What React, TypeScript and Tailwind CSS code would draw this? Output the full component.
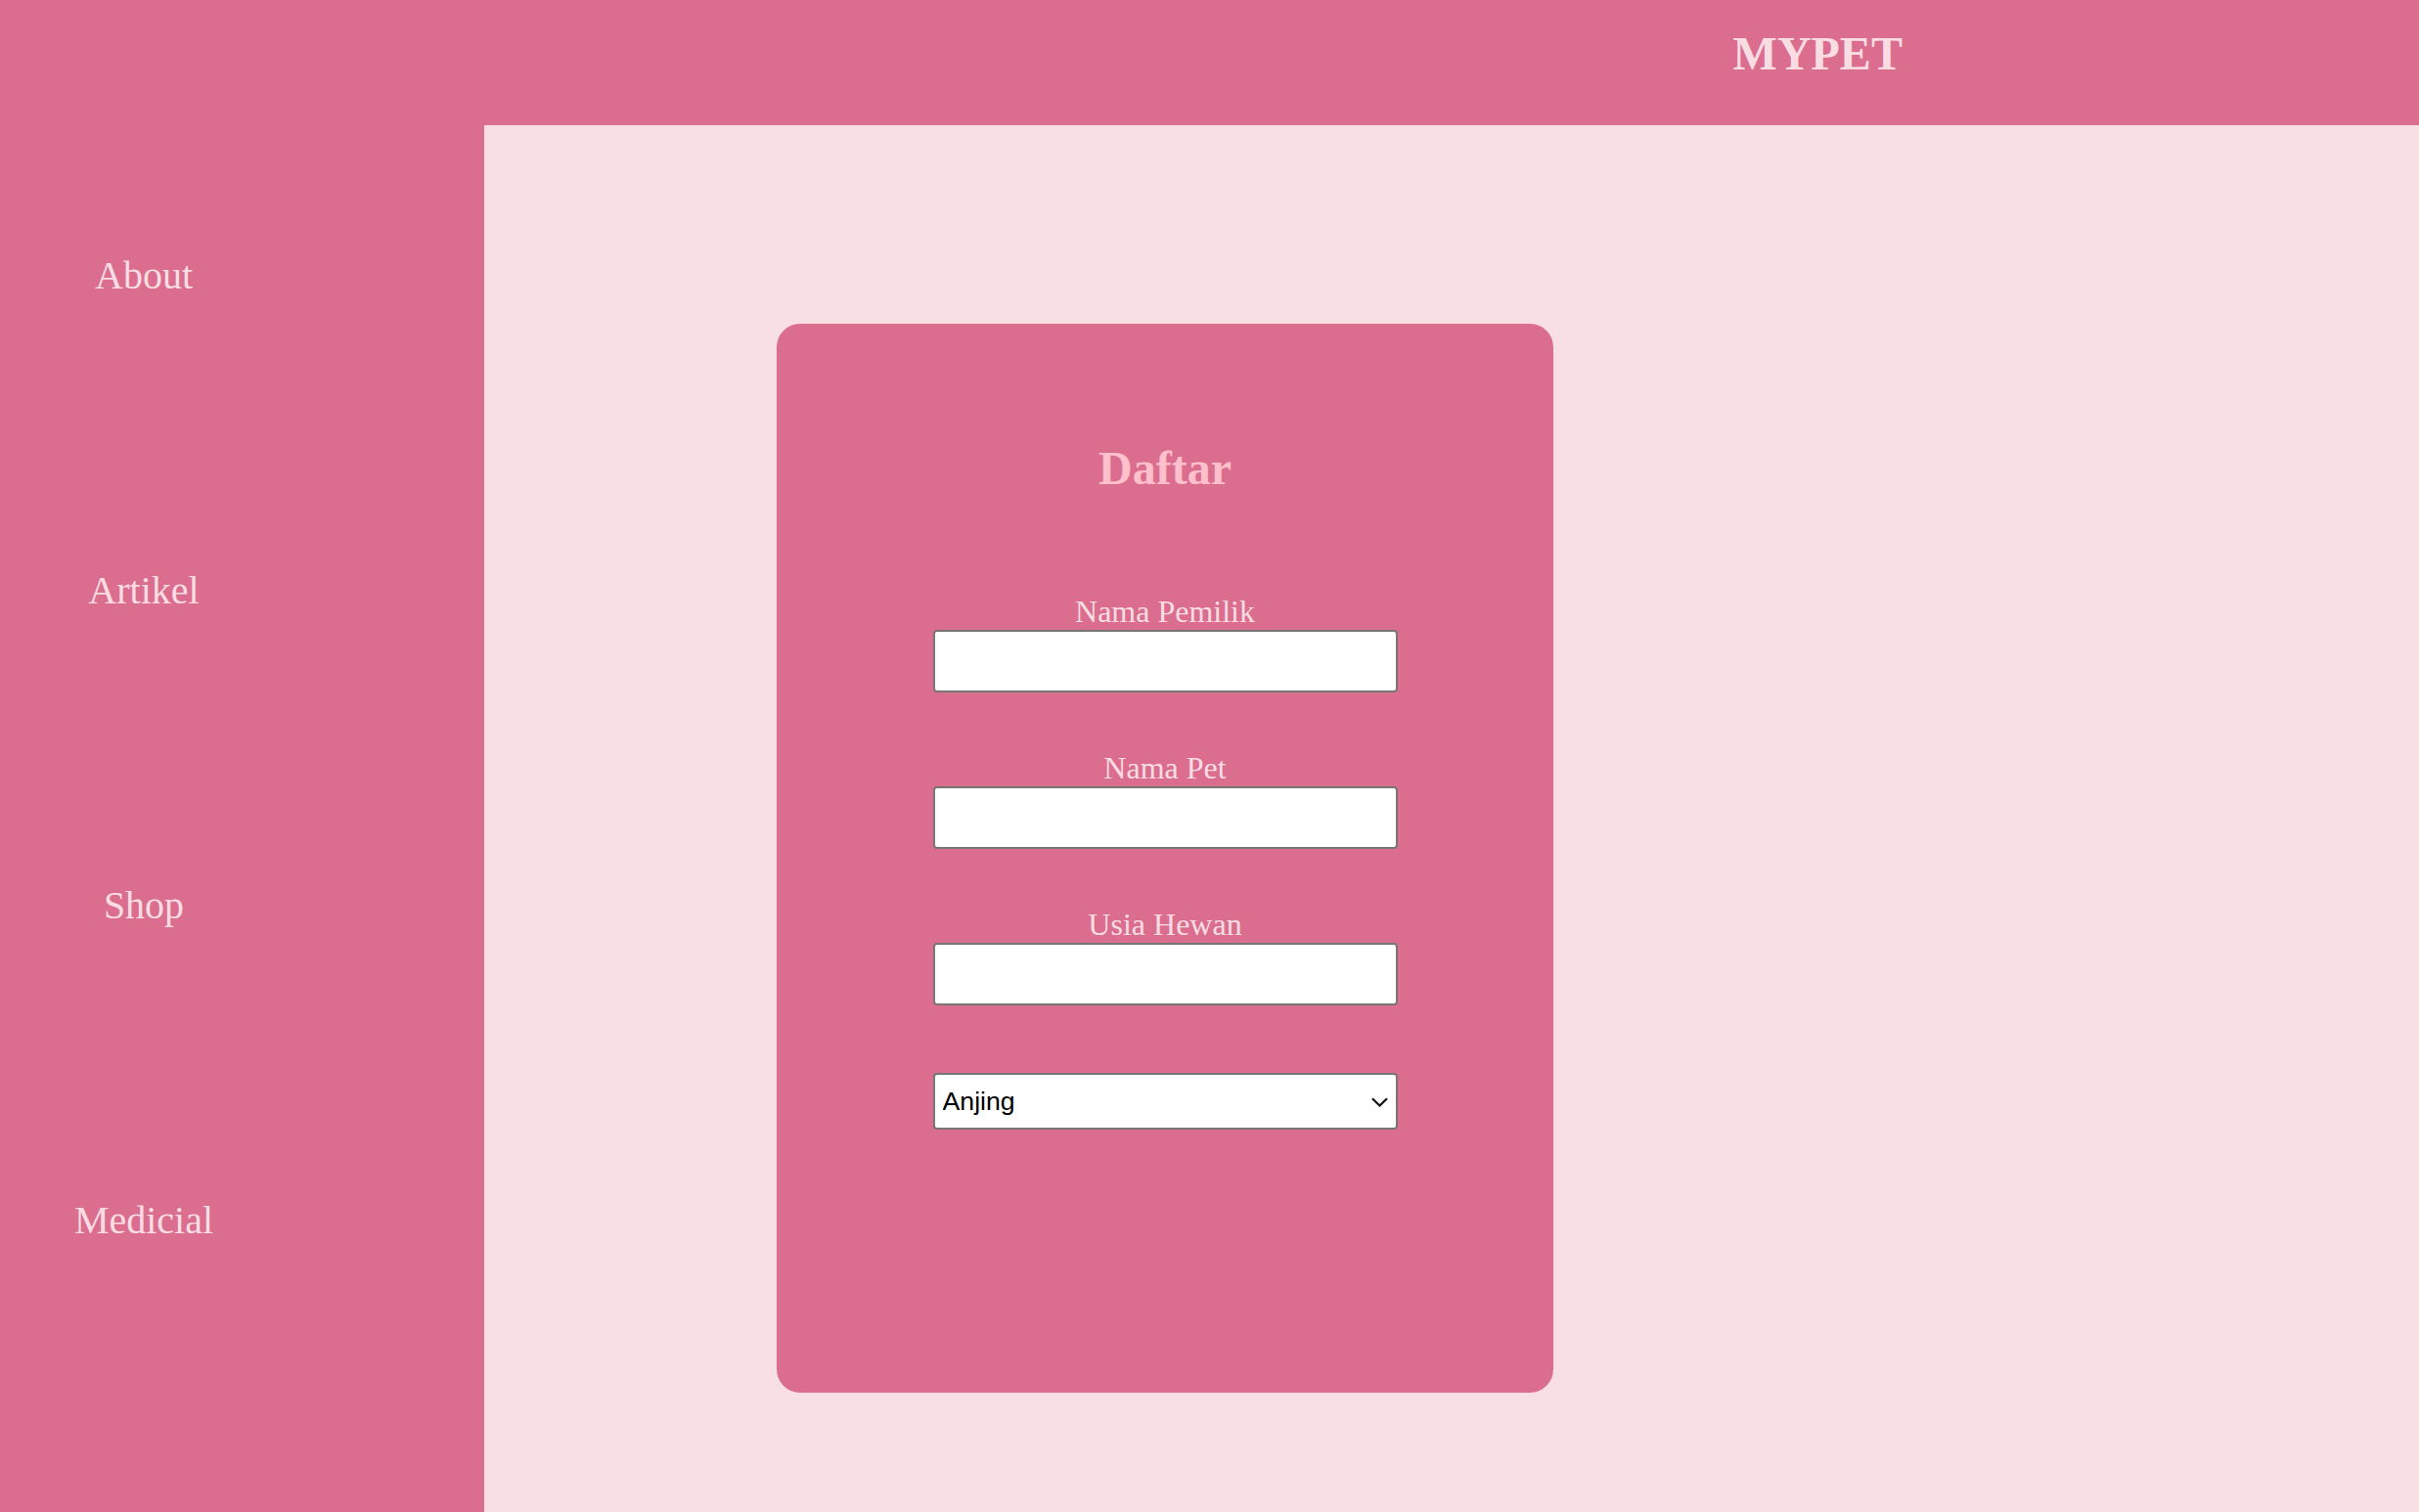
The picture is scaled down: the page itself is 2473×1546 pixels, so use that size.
import { useState } from "react";

const menu = ["About", "Artikel", "Shop", "Medicial"];

function Field({ label }: { label: string }) {
  return (
    <div className="flex flex-col items-center">
      <label className="block text-[32px] leading-[38px] text-[#f9dde3]">{label}</label>
      <input
        type="text"
        className="block h-[64px] w-[475px] rounded-[4px] border-2 border-[#767676] bg-white px-2 text-[26px] text-black outline-none"
      />
    </div>
  );
}

export default function App() {
  const [pet, setPet] = useState("Anjing");

  return (
    <div className="flex min-h-[1546px] flex-col bg-[#f8dfe3] font-['Liberation_Serif',serif]">
      {/* header */}
      <header className="grid h-[128px] grid-cols-2 bg-[#db6e8f]">
        <div />
        <h1 className="pl-[7px] pt-[27px] text-center text-[48px] font-bold leading-[55px] text-[#f9dde3]">MYPET</h1>
      </header>

      <div className="flex flex-1">
        {/* sidebar */}
        <nav className="w-[495px] shrink-0 bg-[#db6e8f]">
          <ul className="flex w-[294px] flex-col gap-[276px] pt-[131px] text-center">
            {menu.map((m) => (
              <li key={m} className="text-[40px] leading-[46px] text-[#f9dde3]">
                {m}
              </li>
            ))}
          </ul>
        </nav>

        {/* main */}
        <main className="flex-1 pl-[299px] pt-[203px]">
          <div className="flex h-[1093px] w-[794px] flex-col items-center rounded-[24px] bg-[#db6e8f] pt-[120px]">
            <h2 className="text-[48px] font-bold leading-[55px] text-[#ffc0cb]">Daftar</h2>

            <div className="mt-[100px] flex flex-col gap-[58px]">
              <Field label="Nama Pemilik" />
              <Field label="Nama Pet" />
              <Field label="Usia Hewan" />
            </div>

            <div className="relative mt-[69px]">
              <select
                value={pet}
                onChange={(e) => setPet(e.target.value)}
                className="block h-[58px] w-[475px] appearance-none rounded-[4px] border-2 border-[#767676] bg-white pl-[8px] font-['Liberation_Sans',Arial,sans-serif] text-[26.7px] text-black outline-none"
              >
                <option>Anjing</option>
                <option>Kucing</option>
                <option>Burung</option>
              </select>
              <svg
                className="pointer-events-none absolute right-[10px] top-[25px]"
                width="17"
                height="10"
                viewBox="0 0 17 10"
                fill="none"
              >
                <path d="M1 1.2 L8.5 8.5 L16 1.2" stroke="#111" strokeWidth="2.2" />
              </svg>
            </div>
          </div>
        </main>
      </div>
    </div>
  );
}
